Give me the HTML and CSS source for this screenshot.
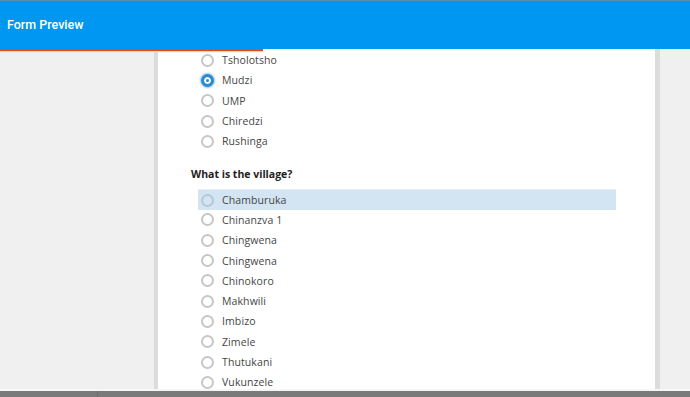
FILE: index.html
```
<!DOCTYPE html>
<html lang="en">

<head>
    <meta charset="UTF-8">
    <meta name="viewport" content="width=device-width, initial-scale=1.0">
    <title>Form Preview</title>

    <link rel="stylesheet" href="styles.css">
</head>

<body>
    <header class="top-bar">
        <span class="top-title">Form Preview</span>
        <div class="progress"></div>
    </header>

    <div class="page">
        <div class="panel">
            <div class="options">
                <label class="option"><span class="radio"></span>Tsholotsho</label>
                <label class="option"><span class="radio checked"></span>Mudzi</label>
                <label class="option"><span class="radio"></span>UMP</label>
                <label class="option"><span class="radio"></span>Chiredzi</label>
                <label class="option"><span class="radio"></span>Rushinga</label>
            </div>

            <h4 class="question">What is the village?</h4>

            <div class="options">
                <label class="option hover"><span class="radio"></span>Chamburuka</label>
                <label class="option"><span class="radio"></span>Chinanzva 1</label>
                <label class="option"><span class="radio"></span>Chingwena</label>
                <label class="option"><span class="radio"></span>Chingwena</label>
                <label class="option"><span class="radio"></span>Chinokoro</label>
                <label class="option"><span class="radio"></span>Makhwili</label>
                <label class="option"><span class="radio"></span>Imbizo</label>
                <label class="option"><span class="radio"></span>Zimele</label>
                <label class="option"><span class="radio"></span>Thutukani</label>
                <label class="option"><span class="radio"></span>Vukunzele</label>
            </div>
        </div>
    </div>

    <div class="status-bar"><span class="status-left"></span></div>
</body>

</html>
```

FILE: styles.css
```
html, body {
    height: 100%;
}

body {
    margin: 0;
    background-color: #f0f0f0;
    font-family: "Open Sans", sans-serif;
    overflow: hidden;
    display: flex;
    flex-direction: column;
}

.top-bar {
    position: relative;
    height: 48px;
    flex-shrink: 0;
    border-top: 1px solid #5c8cb3;
    background-color: #0097f2;
    display: flex;
    align-items: center;
    padding-left: 7px;
    z-index: 2;
}

.top-title {
    color: #fff;
    font-family: Roboto, sans-serif;
    font-weight: 500;
    font-size: 12.5px;
    margin-top: -2px;
}

.progress {
    position: absolute;
    left: 0;
    bottom: -2px;
    width: 263px;
    height: 2px;
    background-color: #f2460d;
    box-shadow: 0 1px 0 #fbd7c9;
}

.page {
    flex: 1;
    min-height: 0;
    padding-left: 154px;
}

.panel {
    width: 497px;
    height: 100%;
    background-color: #fff;
    border-left: 4px solid #dcdcdc;
    border-right: 5px solid #dcdcdc;
    padding-top: 1px;
    box-sizing: border-box;
    width: 506px;
}

.options {
    margin: 0 39px 0 40px;
}

.option {
    display: flex;
    align-items: center;
    height: 20.3px;
    padding-left: 2px;
    box-sizing: border-box;
    font-size: 10.5px;
    letter-spacing: 0.1px;
    color: #454545;
}

.option.hover {
    background-color: #d3e4f2;
    border-top: 1px solid #e4eef7;
}

.radio {
    width: 13px;
    height: 13px;
    box-sizing: border-box;
    border: 2px solid #c6c6c6;
    border-radius: 50%;
    background-color: #fff;
    margin-left: 1px;
    margin-right: 8px;
}

.option.hover .radio {
    background-color: transparent;
    border-color: #b7c6d3;
}

.radio.checked {
    border-color: #2b8ad0;
    background-color: #2b8ad0;
    box-shadow: inset 0 0 0 2px #fff, 0 0 2px 1px rgba(43, 138, 208, 0.45);
    border-width: 3px;
}

.question {
    margin: 15px 0 6px 33px;
    font-size: 10.5px;
    font-weight: 700;
    line-height: 17px;
    color: #222;
}

.status-bar {
    height: 6px;
    flex-shrink: 0;
    background-color: #7a7a7a;
    border-top: 2px solid #f6f6f6;
    display: flex;
}

.status-left {
    width: 97px;
    border-right: 1px solid #6e6e6e;
}
```
